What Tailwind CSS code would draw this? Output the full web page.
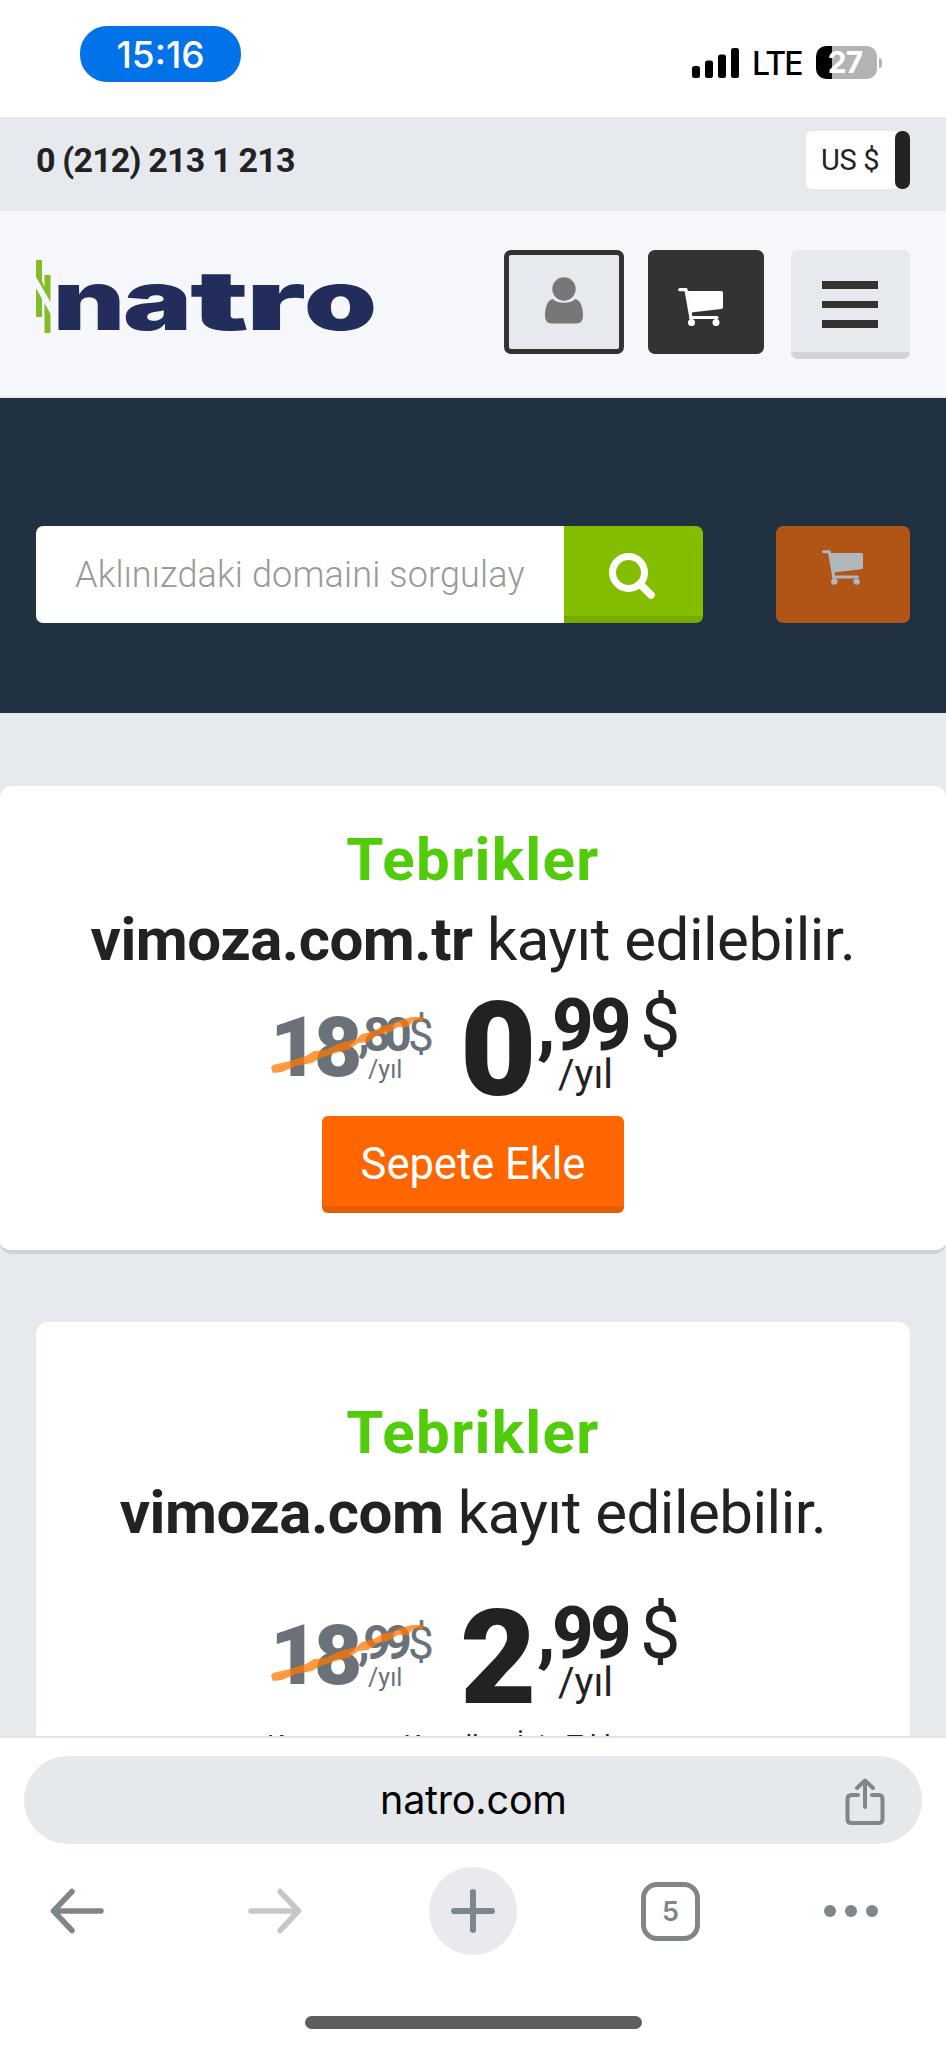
<!DOCTYPE html>
<html lang="tr">
<head>
<meta charset="utf-8">
<title>natro.com</title>
<script src="https://cdn.jsdelivr.net/npm/@tailwindcss/browser@4"></script>
</head>
<body class="w-[946px] h-[2048px] overflow-hidden bg-white font-[Roboto,sans-serif] text-[#222]">
<svg class="hidden">
  <symbol id="cart" viewBox="0 0 45 38">
    <path d="M1.7 1.7H8L13 30M12.5 29.500H39" fill="none" stroke="currentColor" stroke-width="3.200" stroke-linecap="round" stroke-linejoin="round"/>
    <path d="M9.500 3H43a2 2 0 0 1 2 2V19a2 2 0 0 1-2 2L13 24.500Z" fill="currentColor"/>
    <circle cx="13.500" cy="34.500" r="3.500" fill="currentColor"/><circle cx="38" cy="34.500" r="3.500" fill="currentColor"/>
  </symbol>
  <symbol id="strike" viewBox="0 0 160 58">
    <path d="M1 51 3 48 20 44 36 39 44 34 56 33 70 26 86 22 92 17 104 14 112 9 122 7 130 3 142 0 154 0 152 5 143 4 138 10 128 10 118 16 108 18 98 25 88 26 80 32 66 36 50 41 42 46 26 49 12 55 3 56Z" fill="#ff7800" fill-opacity=".75"/>
  </symbol>
</svg>
<div class="flex h-full flex-col">

  <div class="flex h-[117px] shrink-0 items-start justify-between pl-20 pr-[64px]">
    <div class="mt-[26px] flex h-[56px] w-[161px] items-center justify-center rounded-[27px] bg-[#0272e8] font-[Inter] text-[37px] leading-none font-medium text-white"><span>15:16</span></div>
    <div class="mt-[46px] flex h-[34px] items-start">
      <svg class="mt-[2px] h-[30px] w-[47px]" viewBox="0 0 47 30"><rect y="18" width="8" height="12" rx="2.500"/><rect x="13" y="12.500" width="8" height="17.500" rx="2.500"/><rect x="26" y="6.500" width="8" height="23.500" rx="2.500"/><rect x="39" width="8" height="30" rx="2.500"/></svg>
      <span class="ml-[13px] w-[50px] font-[Inter] text-[32px] leading-[36px] font-medium tracking-[-1.800px] text-black">LTE</span>
      <div class="ml-[14px] flex h-[33px] w-[61px] items-center justify-center rounded-[10px] bg-linear-to-r from-black from-[26%] to-[#b3b3b3] to-[26%] font-[Inter] text-[30px] font-bold tracking-[-1px] text-white"><span class="-ml-[3px]">27</span></div>
      <div class="mt-[12px] ml-[2px] h-[10px] w-[3px] rounded-r-full bg-[#b3b3b3]"></div>
    </div>
  </div>

  <div class="flex h-[94px] shrink-0 items-start justify-between bg-[#e6e9ed] pl-[36px] pr-[36px]">
    <span class="mt-[23px] text-[34px] leading-[40px] font-bold tracking-[-0.8px]">0 (212) 213 1 213</span>
    <div class="mt-[14px] flex h-[58px] w-[104px] rounded-[6px] bg-white">
      <span class="w-[89px] pl-[15px] text-[29px] leading-[58px] tracking-[-0.3px]">US $</span><span class="h-[58px] w-[15px] rounded-[7px] bg-[#222]"></span>
    </div>
  </div>

  <header class="flex h-[187px] shrink-0 items-start border-b-2 border-[#e9ebee] bg-[#f5f7fb] pl-[36px]">
    <svg class="mt-[48px] h-[74px] w-[340px] overflow-visible" viewBox="36 259 340 74">
      <path d="M36 260h6V281L44.500 287V275h6V302L36 277ZM36 288 42 299V317H36ZM44.500 303 50.500 314V333H44.500Z" fill="#82bd27"/>
      <g font-family="Inter" font-weight="900" font-size="83" fill="#222d5c">
        <text x="53" y="329.500" textLength="72" lengthAdjust="spacingAndGlyphs">n</text>
        <text x="123" y="329.500" textLength="69" lengthAdjust="spacingAndGlyphs">a</text>
        <text x="190" y="329.500" textLength="59" lengthAdjust="spacingAndGlyphs">t</text>
        <text x="246" y="329.500" textLength="60" lengthAdjust="spacingAndGlyphs">r</text>
        <text x="304" y="329.500" textLength="73" lengthAdjust="spacingAndGlyphs">o</text>
      </g>
    </svg>
    <div class="mt-[39px] ml-[128px] flex h-[104px] w-[120px] justify-center rounded-[7px] border-[5px] border-[#333] bg-[#e6e9ed]">
      <svg class="mt-[22px] h-[47px] w-[38px]" viewBox="0 0 38 47" fill="#777"><circle cx="19" cy="12" r="11.700"/><path d="M8 22C12 27 26 27 30 22 36 23 38 31 38 39Q38 46.500 31 46.500H7Q0 46.500 0 39C0 31 2 23 8 22Z"/></svg>
    </div>
    <div class="mt-[39px] ml-[24px] flex h-[104px] w-[116px] rounded-[7px] bg-[#333] pt-[38px] pl-[30px] text-white"><svg class="h-[38px] w-[45px]"><use href="#cart"/></svg></div>
    <div class="mt-[39px] ml-[27px] flex h-[109px] w-[119px] flex-col items-center gap-[12px] rounded-[7px] border-b-[7px] border-[#d2d4d7] bg-[#e6e9ed] pt-[31px] pr-[2px]">
      <span class="h-[7.500px] w-[56px] bg-[#333]"></span><span class="h-[7.500px] w-[56px] bg-[#333]"></span><span class="h-[7.500px] w-[56px] bg-[#333]"></span>
    </div>
  </header>

  <section class="flex h-[315px] shrink-0 items-start bg-[#203142] pt-[128px] pl-[36px]">
    <div class="h-[97px] w-[528px] rounded-l-[7px] bg-white pl-[39px] text-[36px] leading-[98px] font-light tracking-[0.15px] whitespace-nowrap text-[#999]">Aklınızdaki domaini sorgulay</div>
    <div class="flex h-[97px] w-[139px] justify-center rounded-r-[7px] border-b-[7px] border-[#77aa00] bg-[#84bd00] pt-[27px]">
      <svg class="-ml-[4px] h-[46px] w-[46px]" viewBox="0 0 46 46" fill="none" stroke="#fff"><circle cx="19.500" cy="19.500" r="16" stroke-width="7"/><path d="M31 31 42 42" stroke-width="7.500" stroke-linecap="round"/></svg>
    </div>
    <div class="ml-[73px] flex h-[97px] w-[134px] rounded-[7px] bg-[#b05515] pt-[24px] pl-[46px] text-[#b0b8be]"><svg class="h-[35px] w-[41px]"><use href="#cart"/></svg></div>
  </section>

  <main class="flex min-h-0 grow flex-col overflow-hidden bg-[#e6e9ed] pt-[73px]">
    <section class="flex h-[468px] shrink-0 flex-col rounded-[12px] border-b-4 border-[#cfd2d6] bg-white pt-[34px]">
      <h2 class="text-center text-[60px] leading-[80px] font-bold tracking-[1.400px] text-[#50cc0a]">Tebrikler</h2>
      <p class="text-center text-[60px] leading-[80px] tracking-[-0.5px] whitespace-nowrap"><b>vimoza.com.tr</b> kayıt edilebilir.</p>
      <div class="flex h-[132px] items-start pt-[4px] pl-[270px]">
        <div class="relative flex text-[#6b7179]">
          <span class="mt-[22px] w-[88px] text-[84px] leading-[84px] font-black tracking-[-5px]">18</span>
          <div class="mt-[27px] w-[50px]"><div class="text-[48px] leading-[48px] font-bold tracking-[-6.500px]">,80</div><div class="-mt-[2px] pl-[10px] text-[25px] leading-[25px]">/yıl</div></div>
          <span class="mt-[27px] w-[52px] text-[46px] leading-[48px]">$</span>
          <svg class="absolute top-[33px] left-0 h-[58px] w-[160px]"><use href="#strike"/></svg>
        </div>
        <span class="w-[77px] text-[132px] leading-[132px] font-black tracking-[-2px]">0</span>
        <div class="mt-[6px] w-[103px]"><div class="text-[72px] leading-[72px] font-extrabold tracking-[-3.500px]">,99</div><div class="-mt-[7px] pl-[21px] text-[40px] leading-[40px]">/yıl</div></div>
        <span class="mt-[6px] text-[72px] leading-[72px]">$</span>
      </div>
      <div class="mt-[4px] ml-[322px] h-[97px] w-[302px] rounded-[6px] border-b-[7px] border-[#e65c00] bg-[#ff6600] text-center text-[43.500px] leading-[97px] text-white">Sepete Ekle</div>
    </section>
    <section class="mx-[36px] mt-[68px] flex grow flex-col overflow-hidden rounded-t-[12px] bg-white pt-[71px]">
      <h2 class="text-center text-[60px] leading-[80px] font-bold tracking-[1.400px] text-[#50cc0a]">Tebrikler</h2>
      <p class="text-center text-[60px] leading-[80px] tracking-[-0.5px] whitespace-nowrap"><b>vimoza.com</b> kayıt edilebilir.</p>
      <div class="mt-[35px] flex h-[132px] shrink-0 items-start pt-[4px] pl-[234px]">
        <div class="relative flex text-[#6b7179]">
          <span class="mt-[22px] w-[88px] text-[84px] leading-[84px] font-black tracking-[-5px]">18</span>
          <div class="mt-[27px] w-[50px]"><div class="text-[48px] leading-[48px] font-bold tracking-[-6.500px]">,99</div><div class="-mt-[2px] pl-[10px] text-[25px] leading-[25px]">/yıl</div></div>
          <span class="mt-[27px] w-[52px] text-[46px] leading-[48px]">$</span>
          <svg class="absolute top-[33px] left-0 h-[58px] w-[160px]"><use href="#strike"/></svg>
        </div>
        <span class="w-[77px] text-[132px] leading-[132px] font-black tracking-[-2px]">2</span>
        <div class="mt-[6px] w-[103px]"><div class="text-[72px] leading-[72px] font-extrabold tracking-[-3.500px]">,99</div><div class="-mt-[7px] pl-[21px] text-[40px] leading-[40px]">/yıl</div></div>
        <span class="mt-[6px] text-[72px] leading-[72px]">$</span>
      </div>
      <p class="mt-[8px] shrink-0 pl-[231px] text-[27.500px] leading-[36px] whitespace-nowrap">Kampanya Koşulları İçin Tıklayın.</p>
    </section>
  </main>

  <footer class="flex h-[312px] shrink-0 flex-col border-t-2 border-[#e3e4e6] bg-white pt-[18px]">
    <div class="mx-[24px] flex h-[88px] shrink-0 items-center rounded-full bg-[#e6e9ec] pl-[356px]">
      <span class="w-[465px] font-[Inter] text-[39.500px] leading-[40px] tracking-[-0.2px] text-black">natro.com</span>
      <svg class="mt-[4px] h-[48px] w-[40px]" viewBox="0 0 40 48" fill="none" stroke="#80868b" stroke-width="4" stroke-linecap="round" stroke-linejoin="round"><path d="M13 17H6.500Q2.500 17 2.500 21V41Q2.500 45 6.500 45H33.500Q37.500 45 37.500 41V21Q37.500 17 33.500 17H27M20 29V3M12 10 20 2.500 28 10"/></svg>
    </div>
    <nav class="mt-[23px] flex h-[88px] shrink-0 items-center pl-[50px]">
      <svg class="h-[46px] w-[54px]" viewBox="0 0 54 46" fill="none" stroke="#7e868a" stroke-width="5.500" stroke-linecap="round" stroke-linejoin="round"><path d="M51 23H4M22 3.500 3.500 23 22 42.500"/></svg>
      <svg class="ml-[144px] h-[46px] w-[54px]" viewBox="0 0 54 46" fill="none" stroke="#c6c7c8" stroke-width="5.500" stroke-linecap="round" stroke-linejoin="round"><path d="M3 23H50M32 3.500 50.500 23 32 42.500"/></svg>
      <div class="ml-[127px] flex h-[88px] w-[88px] items-center justify-center rounded-full bg-[#e8eaee]"><svg class="h-[44px] w-[44px]" viewBox="0 0 44 44" stroke="#7e868e" stroke-width="6" stroke-linecap="round"><path d="M3 22H41M22 3V41"/></svg></div>
      <div class="ml-[124px] flex h-[59px] w-[59px] items-center justify-center rounded-[16px] border-[5px] border-[#7e868a] pt-[3px] font-[Inter] text-[27px] font-semibold text-[#7e868a]">5</div>
      <svg class="ml-[124px] h-[12px] w-[54px]" viewBox="0 0 54 12" fill="#7e868e"><circle cx="6" cy="6" r="6"/><circle cx="27" cy="6" r="6"/><circle cx="48" cy="6" r="6"/></svg>
    </nav>
    <div class="mt-[61px] ml-[305px] h-[13px] w-[337px] shrink-0 rounded-full bg-[#5e5e5e]"></div>
  </footer>
</div>
</body>
</html>
